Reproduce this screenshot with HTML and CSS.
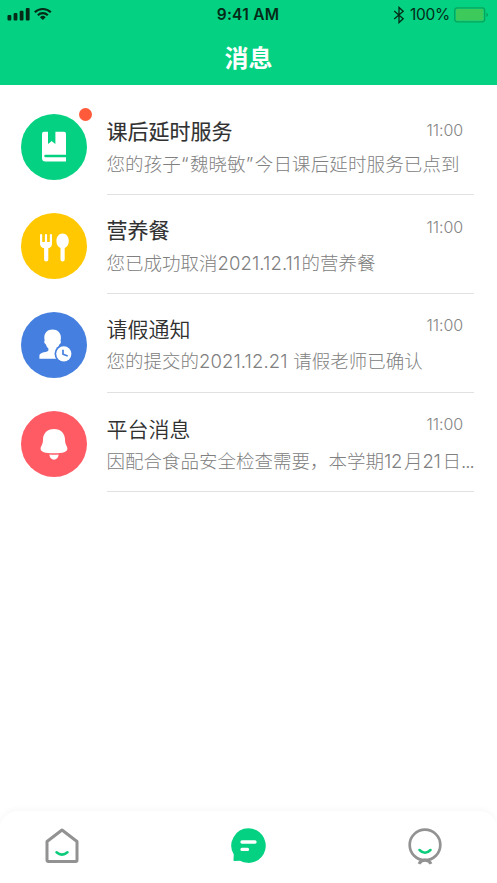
FILE: index.html
```html
<!DOCTYPE html>
<html lang="zh-CN">
<head>
<meta charset="utf-8">
<title>消息</title>
<link rel="stylesheet" href="styles.css">
</head>
<body>
<div class="app">
  <header class="header">
    <div class="status">
      <div class="status-left">
        <svg width="46" height="16" viewBox="0 0 46 16">
          <rect x=".5" y="9" width="3.8" height="5.400" rx="1"/><rect x="6.600" y="7" width="3.8" height="7.400" rx="1"/><rect x="12.700" y="4.7" width="3.8" height="9.700" rx="1"/><rect x="18.800" y="2" width="3.8" height="12.400" rx="1"/>
          <g fill="none" stroke="#052b18" stroke-width="2.1"><path d="M27.8 6.3a11.2 11.2 0 0 1 16 0"/><path d="M30.8 9.2a7.1 7.1 0 0 1 10 0"/></g>
          <path d="M32.9 11.2a4.2 4.2 0 0 1 5.8 0L35.8 14z"/>
        </svg>
      </div>
      <div class="clock">9:41 AM</div>
      <div class="status-right">
        <svg width="12" height="18" viewBox="0 0 12 18"><path d="M1.2 5 10.2 12.7 6 16.6V1.4l4.2 3.9-9 7.7" fill="none" stroke="#052b18" stroke-width="1.3"/></svg>
        <span class="percent">100%</span>
        <svg width="35" height="16" viewBox="0 0 35 16"><rect x=".7" y=".8" width="30" height="14" rx="2.5" fill="none" stroke="#08a55c" stroke-width="1.3"/><rect x="2" y="2.1" width="27.4" height="11.4" rx="1.3" fill="#3ec95b"/><path d="M32.6 5.5q2.2 2.3 0 4.6z" fill="#07874c"/></svg>
      </div>
    </div>
    <h1 class="page-title">消息</h1>
  </header>

  <main class="list">
    <article class="row first">
      <div class="avatar green">
        <svg width="66" height="66" viewBox="0 0 66 66"><path fill="#fff" d="M23 17.800h4V30l3.700-3 3.700 3V17.800h8.600a2 2 0 0 1 2 2V40.700H24.500a1.200 1.200 0 0 0 0 2.500H45V47.500H24.500a3.500 3.500 0 0 1-3.500-3.500V19.800a2 2 0 0 1 2-2z"/><path d="M27.400 17.500h6.600v11.800l-3.300-2.800-3.300 2.800z" fill="#04d181"/><path d="M24.500 41.100H45v1.700H24.500z" fill="#04d181"/></svg>
        <i class="unread"></i>
      </div>
      <div class="body">
        <div class="line"><h2 class="title medium">课后延时服务</h2><time class="time">11:00</time></div>
        <p class="summary">您的孩子<span class="quote">“</span>魏晓敏<span class="quote">”</span>今日课后延时服务已点到</p>
      </div>
    </article>
    <article class="row second">
      <div class="avatar yellow">
        <svg width="66" height="66" viewBox="0 0 66 66" fill="#fff"><path d="M19 22a1.1 1.1 0 0 1 2.2 0v7h2.7v-7a1.1 1.1 0 0 1 2.2 0v7h2.7v-7a1.1 1.1 0 0 1 2.2 0v8.7c0 2.4-1.4 4-3.7 4.600v11.100a2.100 2.100 0 0 1-4.200 0V35.300C20.600 34.700 19 33 19 30.700z"/><path d="M41.600 20.500c3.700 0 6.200 3.400 6.200 7.400 0 3.700-1.800 6.100-4.100 7.100v11.400a2.100 2.100 0 0 1-4.200 0V35c-2.400-1-4.100-3.400-4.100-7.100 0-4 2.500-7.400 6.200-7.400z"/></svg>
      </div>
      <div class="body">
        <div class="line"><h2 class="title medium">营养餐</h2><time class="time">11:00</time></div>
        <p class="summary">您已成功取消<span class="num">2021.12.11</span>的营养餐</p>
      </div>
    </article>
    <article class="row third">
      <div class="avatar blue">
        <svg width="66" height="66" viewBox="0 0 66 66"><path fill="#fff" d="M31.5 17.500c5 0 8.400 3.300 8.400 8 0 1.400-.1 2.200-.4 3 .9 1 .3 3.400-1.200 4.100-.6 1.900-1.600 3.300-2.700 4.300v1.700c0 2 6 2.600 8 4.300v3.900H18.400v-3.200c0-3.600 9-3.200 9-5.300v-1.700c-1.100-1-2-2.500-2.500-4.200-1.600-.7-2.200-3.100-1.200-4.100-.3-.8-.4-1.700-.4-2.800 0-4.700 3.200-8 8.200-8z"/><circle cx="42.800" cy="41.800" r="9.300" fill="#457fe0"/><circle cx="42.800" cy="41.800" r="7.600" fill="#fff"/><path d="M42 37.700v4.500l4.700 1.800" fill="none" stroke="#457fe0" stroke-width="1.700"/></svg>
      </div>
      <div class="body">
        <div class="line"><h2 class="title">请假通知</h2><time class="time">11:00</time></div>
        <p class="summary">您的提交的<span class="num">2021.12.21</span><span class="space"> </span>请假老师已确认</p>
      </div>
    </article>
    <article class="row fourth">
      <div class="avatar red">
        <svg width="66" height="66" viewBox="0 0 66 66" fill="#fff"><path d="M33 18c7 0 11 4.800 11 10.500 0 5.500 2.400 6.500 2.400 9.300 0 3.200-4 4.500-13.400 4.500s-13.400-1.300-13.400-4.500c0-2.800 2.400-3.800 2.400-9.300C22 22.800 26 18 33 18z"/><path d="M28.300 43.600q4.700.5 9.400 0-.8 5.100-4.700 5.100t-4.700-5.100z"/></svg>
      </div>
      <div class="body">
        <div class="line"><h2 class="title">平台消息</h2><time class="time">11:00</time></div>
        <p class="summary">因配合食品安全检查需要，本学期<span class="num short">12</span>月<span class="num short">21</span>日<span class="dots">...</span></p>
      </div>
    </article>
  </main>

  <nav class="tabs">
    <svg width="38" height="40" viewBox="0 0 38 40" fill="none" stroke-linejoin="round" stroke-linecap="round"><path d="M4 15.500 19 4l15 11.500V34.300a1.200 1.200 0 0 1-1.200 1.200H5.200A1.200 1.200 0 0 1 4 34.300z" stroke="#929292" stroke-width="3"/><path d="M13.500 26.300q5.500 4.600 11 0" stroke="#0ccb7a" stroke-width="2.500"/></svg>
    <svg class="active" width="38" height="40" viewBox="0 0 38 40"><path fill="#04d181" d="M19.500 2.300A17.300 17.300 0 1 1 11 34.700L5.500 34.900Q4.300 34.900 4.500 33.600L4.800 28.500A17.300 17.300 0 0 1 19.500 2.300z"/><path d="M13 16h13M13 23.400h5.500" stroke="#fff" stroke-width="3.300" stroke-linecap="round"/></svg>
    <svg width="38" height="40" viewBox="0 0 38 40" fill="none"><path d="M13 37.900Q14.500 34.500 19 34q4.500.5 6 3.900" stroke="#929292" stroke-width="3"/><circle cx="19" cy="18.900" r="15.300" stroke="#929292" stroke-width="2.700"/><path d="M13.500 24q5.500 5.400 11 0" stroke="#0ccb7a" stroke-width="2.500" stroke-linecap="round"/></svg>
  </nav>
</div>
</body>
</html>
```
FILE: styles.css
```css
* { box-sizing: border-box; }
body { margin: 0; background: #fff; font-family: Inter, "Noto Sans CJK SC", sans-serif; }
h1, h2, p { margin: 0; }
svg { display: block; flex: none; }
.app { height: 883px; display: flex; flex-direction: column; overflow: hidden; }
.header { height: 85px; flex: none; background: #04d181; }
.status { height: 28px; padding: 0 8px 0 7px; display: grid; grid-template-columns: 1fr auto 1fr; align-items: center; color: #052b18; }
.status-left svg { margin-top: -1px; fill: #052b18; }
.clock { font-size: 15.5px; font-weight: 600; letter-spacing: .25px; line-height: 29px; }
.status-right { display: flex; align-items: center; justify-content: flex-end; }
.percent { margin: 0 4px 0 5px; font-size: 15.5px; letter-spacing: -.25px; }
.page-title { color: #fff; font-size: 24px; font-weight: 700; line-height: 61px; text-align: center; }
.list { flex: 1; padding-top: 11px; }
.row { height: 99px; padding: 0 23px 0 21px; display: flex; gap: 19.5px; }
.avatar { position: relative; width: 66px; height: 66px; margin-top: 17.5px; border-radius: 50%; flex: none; }
.green { background: #04d181; }
.yellow { background: #ffc800; }
.blue { background: #457fe0; }
.red { background: #ff5b65; }
.unread { position: absolute; top: -6px; right: -5px; width: 13px; height: 13px; border-radius: 50%; background: #ff5b3a; }
.body { flex: 1; min-width: 0; border-bottom: 1px solid #e0e2e1; padding-top: 20px; white-space: nowrap; }
.line { height: 32px; display: flex; justify-content: space-between; padding-right: 11px; }
.title { font-size: 21px; line-height: 32px; font-weight: 350; color: #303030; }
.medium { font-weight: 400; -webkit-text-stroke: .15px #303030; }
.time { font-size: 16px; line-height: 28px; font-weight: 300; letter-spacing: -.1px; color: #858585; }
.summary { font-size: 18.5px; line-height: 32px; font-weight: 300; color: #808080; }
.first .summary { letter-spacing: .12px; }
.fourth .body { padding-top: 21px; }
.second .body { padding-top: 20px; }
.second .time { line-height: 24px; }
.third .time { line-height: 22px; }
.fourth .time { line-height: 20px; }
.third .summary, .fourth .summary { margin-top: -1px; }
.num { display: inline-block; width: 84px; letter-spacing: .1px; }
.third .num { width: 89px; letter-spacing: .1px; }
.num.short { width: 20px; letter-spacing: -.3px; }
.quote { display: inline-block; width: 9px; }
.dots { letter-spacing: -1px; }
.tabs { height: 72px; flex: none; padding: 15px 53px 0 43px; display: flex; justify-content: space-between; border-radius: 18px 18px 0 0; background: #fff; box-shadow: 0 -2px 6px rgba(0, 0, 0, .03); }
.active { margin-left: 8px; }
```
